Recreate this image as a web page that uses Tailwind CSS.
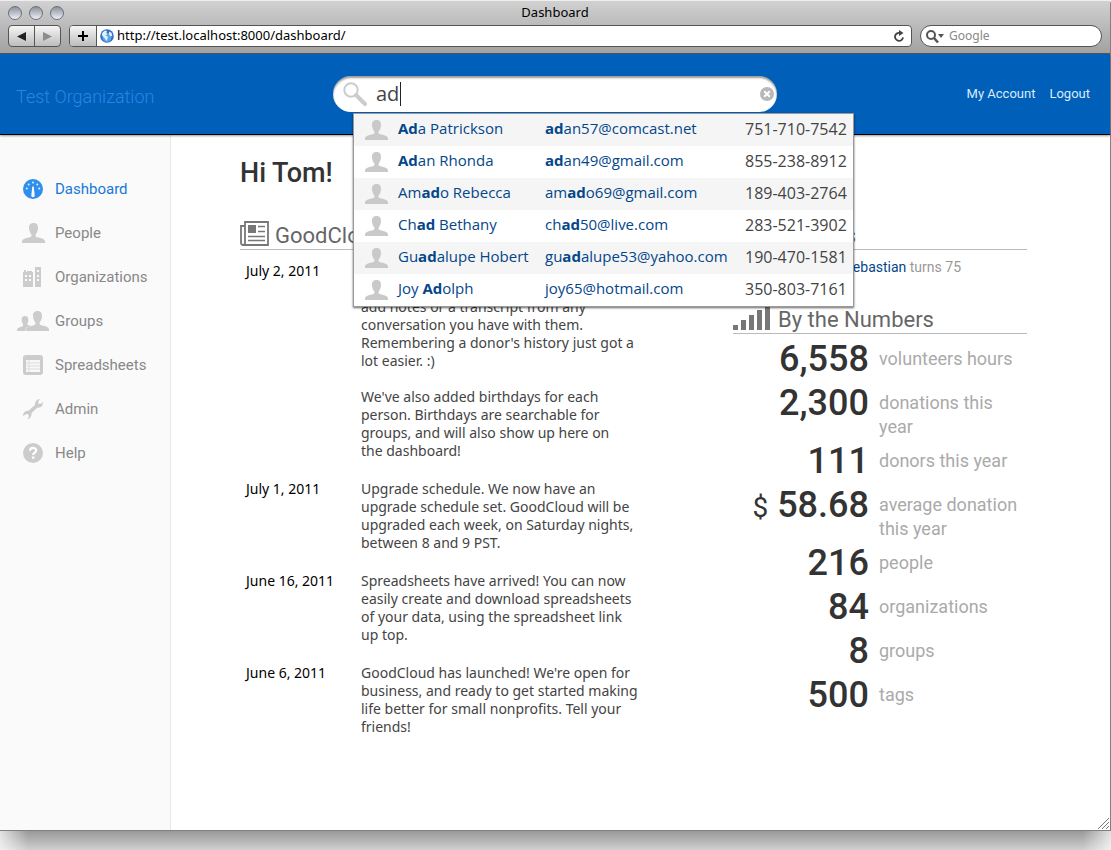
<!DOCTYPE html>
<html lang="en">
<head>
<meta charset="utf-8">
<title>Dashboard</title>
<script src="https://cdn.jsdelivr.net/npm/@tailwindcss/browser@4"></script>
</head>
<body class="flex min-h-screen flex-col bg-white font-['Open_Sans',sans-serif] text-[#444]">
<svg class="hidden" aria-hidden="true">
  <symbol id="person" viewBox="0 0 23 20"><path d="M11.500 0C8.300 0 6.800 2.200 7 5c.1 3 1 5 2.400 6.400v2.200C7 15 0 15.400 0 18.500V20h23v-1.500c0-3.100-7-3.500-9.400-4.900v-2.200C15 10 15.900 8 16 5c.2-2.800-1.300-5-4.500-5z"/></symbol>
</svg>
<div class="relative flex grow flex-col rounded-t border-r border-b border-[#808080]">
  <div class="flex flex-col border-b border-[#555] bg-linear-to-b from-[#d2d2d2] to-[#a2a2a2]">
    <div class="flex h-6 items-center border-t border-[#eee] px-2">
      <div class="flex flex-1 gap-[7px]">
        <button aria-label="Close" class="size-3.5 rounded-full border border-[#667080] bg-linear-to-b from-[#8d929b] to-[#eef0f5]"></button>
        <button aria-label="Minimize" class="size-3.5 rounded-full border border-[#667080] bg-linear-to-b from-[#8d929b] to-[#eef0f5]"></button>
        <button aria-label="Zoom" class="size-3.5 rounded-full border border-[#667080] bg-linear-to-b from-[#8d929b] to-[#eef0f5]"></button>
      </div>
      <span class="pb-[2px] font-['Noto_Sans',sans-serif] text-[13px] leading-4 text-black">Dashboard</span>
      <div class="flex-1"></div>
    </div>
    <div class="flex h-[29px] items-start gap-2 px-2 pt-px">
      <div class="flex h-[22px] w-[53px] shrink-0 rounded border border-[#555] bg-linear-to-b from-[#f6f6f6] to-[#bdbdbd]">
        <button aria-label="Back" class="flex flex-1 items-center justify-center border-r border-[#555]"><svg class="h-[9px] w-[9px] fill-[#222]" viewBox="0 0 9 9"><path d="M9 0v9L0 4.500z"/></svg></button>
        <button aria-label="Forward" class="flex flex-1 items-center justify-center"><svg class="h-[9px] w-[9px] fill-[#8c8c8c]" viewBox="0 0 9 9"><path d="M0 0v9l9-4.500z"/></svg></button>
      </div>
      <div class="flex h-[22px] grow overflow-hidden rounded border border-[#555] bg-white">
        <button aria-label="Add bookmark" class="flex w-[27px] shrink-0 items-center justify-center border-r border-[#555] bg-linear-to-b from-[#f6f6f6] to-[#bdbdbd]"><svg class="size-[10px] fill-black" viewBox="0 0 10 10"><path d="M4 0h2v4h4v2H6v4H4V6H0V4h4z"/></svg></button>
        <svg class="my-[3px] ml-[3px] size-[14px] shrink-0" viewBox="0 0 14 14"><circle cx="7" cy="7" r="6.800" fill="#2e6fc4"/><circle cx="7" cy="8.500" r="4.500" fill="#5da5ea"/><path d="M2.500 3.500 5 1.500l2 .6-.6 1.800 1 1-2 1.600 2.600 1.300L7.400 10l-1 2-1.400-2.400L3 7.500 1.800 6zM9 2.500l2.500 1.300.8 3-1.800.8-1.500-2z" fill="#e3f0fd"/></svg>
        <input aria-label="Address" class="ml-[3px] min-w-0 grow font-['Noto_Sans',sans-serif] text-[13px] text-black outline-none" value="http://test.localhost:8000/dashboard/">
        <button aria-label="Reload" class="mr-[6px] flex items-center"><svg class="size-3" viewBox="0 0 12 12"><path d="M7.800 3.200A4 4 0 1 0 10 7.400" fill="none" stroke="#444" stroke-width="1.800"/><path d="M6 0v6l4.500-3z" fill="#444"/></svg></button>
      </div>
      <label class="flex h-[22px] w-[182px] shrink-0 items-center rounded-full border border-[#555] bg-white pl-[5px]">
        <svg class="mr-[5px] h-[13px] w-[18px] shrink-0" viewBox="0 0 18 13"><circle cx="5" cy="5" r="4" fill="none" stroke="#555" stroke-width="2"/><path d="m8 8 4 4.500" stroke="#555" stroke-width="2.500"/><path d="M12 4h6l-3 4z" fill="#555"/></svg>
        <input aria-label="Google search" placeholder="Google" class="w-full min-w-0 font-['Noto_Sans',sans-serif] text-xs outline-none placeholder:text-[#888]">
      </label>
    </div>
  </div>

  <header class="relative z-10 flex h-[81px] items-center border-b border-black bg-[#005fb9] px-4 font-[Roboto,sans-serif] shadow-[0_1px_2px_#0006]">
    <a href="#" class="flex-1 pt-[6px] text-lg leading-6 font-light text-[#2488e6]">Test Organization</a>
    <div class="relative w-[444px]">
      <label class="flex h-9 items-center rounded-full bg-white px-[10px] shadow-[inset_0_2px_2px_#0006]">
        <svg class="mr-[9px] size-6 shrink-0" viewBox="0 0 24 24"><circle cx="8" cy="8" r="6.700" fill="none" stroke="#ccc" stroke-width="2"/><path d="m13 13 9 9" stroke="#ccc" stroke-width="4" stroke-linecap="round"/></svg>
        <span class="flex grow items-center">
          <input aria-label="Search contacts" value="ad" class="w-[24px] font-['Open_Sans',sans-serif] text-xl text-[#444] outline-none">
          <span class="h-6 w-px bg-[#222]"></span>
        </span>
        <button aria-label="Clear search" class="-mr-[7px]"><svg class="size-[14px]" viewBox="0 0 14 14"><circle cx="7" cy="7" r="7" fill="#b8b8b8"/><path d="m4.200 4.200 5.600 5.600m0-5.600-5.600 5.600" stroke="#fff" stroke-width="2"/></svg></button>
      </label>
      <div class="absolute top-[37px] left-5 w-[501px] border border-[#999] bg-white font-['Open_Sans',sans-serif] text-[15px] shadow-[0_1px_2px_#0009]">
        <table class="w-full table-fixed whitespace-nowrap">
          <colgroup><col class="w-[44px]"><col class="w-[147px]"><col class="w-[200px]"><col></colgroup>
          <tbody class="[&_a]:text-[#04468a] [&_svg]:ml-[11px] [&_svg]:h-5 [&_svg]:w-[23px] [&_svg]:fill-[#c9c9c9] [&_td+td]:pb-[3px] [&_td:last-child]:text-base [&_tr]:h-8 [&_tr:nth-child(odd)]:bg-[#f5f5f5]">
            <tr><td><svg><use href="#person"/></svg></td><td><a href="#"><b>Ad</b>a Patrickson</a></td><td><a href="#"><b>ad</b>an57@comcast.net</a></td><td>751-710-7542</td></tr>
            <tr><td><svg><use href="#person"/></svg></td><td><a href="#"><b>Ad</b>an Rhonda</a></td><td><a href="#"><b>ad</b>an49@gmail.com</a></td><td>855-238-8912</td></tr>
            <tr><td><svg><use href="#person"/></svg></td><td><a href="#">Am<b>ad</b>o Rebecca</a></td><td><a href="#">am<b>ad</b>o69@gmail.com</a></td><td>189-403-2764</td></tr>
            <tr><td><svg><use href="#person"/></svg></td><td><a href="#">Ch<b>ad</b> Bethany</a></td><td><a href="#">ch<b>ad</b>50@live.com</a></td><td>283-521-3902</td></tr>
            <tr><td><svg><use href="#person"/></svg></td><td><a href="#">Gu<b>ad</b>alupe Hobert</a></td><td><a href="#">gu<b>ad</b>alupe53@yahoo.com</a></td><td>190-470-1581</td></tr>
            <tr><td><svg><use href="#person"/></svg></td><td><a href="#">Joy <b>Ad</b>olph</a></td><td><a href="#">joy65@hotmail.com</a></td><td>350-803-7161</td></tr>
          </tbody>
        </table>
      </div>
    </div>
    <nav class="flex flex-1 justify-end gap-[14px] text-[13px] text-[#dcebfa]"><a href="#">My Account</a><a href="#" class="pr-1">Logout</a></nav>
  </header>

  <div class="flex grow">
    <nav class="w-[171px] shrink-0 border-r border-[#e8e8e8] bg-[#fafafa] pt-8 font-[Roboto,sans-serif] text-[15px] text-[#888] [&_a]:flex [&_a]:h-11 [&_a]:items-center [&_a]:gap-[10px] [&_span]:flex [&_span]:w-[45px] [&_span]:justify-end [&_svg]:shrink-0 [&_svg]:fill-[#ccc]">
      <a href="#" class="text-[#1778d8]"><span class="pr-[2px]"><svg class="size-5" viewBox="0 0 20 20"><circle cx="10" cy="10" r="10" fill="#2e90ec"/><path d="m9.300 7.500-1 9a1.700 1.700 0 0 0 3.400 0l-1-9z" fill="#fff"/><g fill="#e5f2fe"><circle cx="3.800" cy="9.600" r="1"/><circle cx="5.700" cy="5.500" r="1"/><circle cx="10" cy="3.500" r="1"/><circle cx="14.300" cy="5.500" r="1"/><circle cx="16.200" cy="9.600" r="1"/></g></svg></span>Dashboard</a>
      <a href="#"><span><svg class="h-5 w-[23px]"><use href="#person"/></svg></span>People</a>
      <a href="#"><span class="pr-1"><svg class="h-5 w-[18px]" viewBox="0 0 18 20"><path fill-rule="evenodd" d="M0 5h1V3h2v2h1V4h5v1h1v15H0zm2 3v2h2V8zm4 0v2h2V8zm-4 4v2h2v-2zm4 0v2h2v-2zM12 0h6v20h-6zm2 3v2h2V3zm0 5v2h2V8zm0 4v2h2v-2z"/></svg></span>Organizations</a>
      <a href="#"><span><svg class="-mr-1 h-5 w-8" viewBox="0 0 32 20"><svg x="9" width="23" height="20"><use href="#person"/></svg><path d="M8 5C5.500 5 4.500 6.500 4.700 9c.1 2 .6 3 1.300 4v2c-2 1-6 1.500-6 4v1h8.500c0-3 1-3.800 5-5.200-1.500-.6-3-.8-3.500-1.800 1-1 1.300-2 1.300-4C11.500 6.500 10.500 5 8 5z"/></svg></span>Groups</a>
      <a href="#"><span class="pr-[2px]"><svg class="size-5" viewBox="0 0 20 20"><rect width="20" height="20" rx="3"/><path d="M3 5h14v12H3z" fill="#f8f8f8"/><path d="M3 8h14M3 11h14M3 14h14M6 5v12" stroke="#ddd" fill="none"/></svg></span>Spreadsheets</a>
      <a href="#"><span class="pr-[2px]"><svg class="size-5" viewBox="0 0 20 20"><path d="M12 6c-.3-3 1.700-5.700 5-6l-2 3 .6 1.700 1.800.4L20 3c.3 3.500-2 6-5.500 5.600L8.500 14c.4 3-1.200 5.500-4 6l1.500-3-.6-1.600-2-.4L0 17c0-3.400 2.200-5.600 5.600-5.200z"/></svg></span>Admin</a>
      <a href="#"><span class="pr-[2px]"><svg class="size-5" viewBox="0 0 20 20"><circle cx="10" cy="10" r="10"/><path d="M7 7.800C7 5.700 8.200 4.800 10 4.800s3.200 1 3.200 2.600c0 2.200-3 2.200-3 4.600" stroke="#fff" stroke-width="2.200" fill="none"/><path d="M9 13.500h2.400v2.300H9z" fill="#fff"/></svg></span>Help</a>
    </nav>

    <main class="flex-1 pt-5 pr-[83px] pl-[69px]">
      <h1 class="font-[Roboto,sans-serif] text-[27px] leading-9 font-medium text-[#333]">Hi Tom!</h1>
      <div class="flex gap-20 pt-[27px]">
        <section class="flex-1">
          <h2 class="flex h-8 items-end gap-[6px] border-b border-[#bbb] pb-[3px] font-[Roboto,sans-serif] text-[22px] leading-5 whitespace-nowrap text-[#666]">
            <svg class="h-[25px] w-[29px]" viewBox="0 0 29 25"><path d="M5 1h23v23H3a2 2 0 0 1-2-2V5h4zm0 4v17a2 2 0 0 1-2 2" fill="none" stroke="#777" stroke-width="1.800"/><path d="M8 4h8v8H8z" fill="#777"/><path d="M18 5.500h7M18 10.500h7M8 15.500h17M8 19.500h17" stroke="#777" stroke-width="1.500"/></svg>GoodCloud</h2>
          <dl class="grid grid-cols-[115px_1fr] gap-y-5 pt-3 pl-[6px] font-['Noto_Sans',sans-serif] text-sm leading-[18px] whitespace-nowrap [&_dt]:text-black">
            <dt>July 2, 2011</dt><dd class="pt-9">add notes or a transcript from any<br>conversation you have with them.<br>Remembering a donor's history just got a<br>lot easier. :)<br><br>We've also added birthdays for each<br>person. Birthdays are searchable for<br>groups, and will also show up here on<br>the dashboard!</dd>
            <dt>July 1, 2011</dt><dd>Upgrade schedule. We now have an<br>upgrade schedule set. GoodCloud will be<br>upgraded each week, on Saturday nights,<br>between 8 and 9 PST.</dd>
            <dt>June 16, 2011</dt><dd>Spreadsheets have arrived! You can now<br>easily create and download spreadsheets<br>of your data, using the spreadsheet link<br>up top.</dd>
            <dt>June 6, 2011</dt><dd>GoodCloud has launched! We're open for<br>business, and ready to get started making<br>life better for small nonprofits. Tell your<br>friends!</dd>
          </dl>
        </section>
        <section class="w-[294px] shrink-0 font-[Roboto,sans-serif]">
          <h2 class="flex h-8 items-end border-b border-[#bbb] pb-[3px] text-[22px] leading-5 text-[#666]"><span class="w-[123px] text-right whitespace-nowrap">Birthdays</span></h2>
          <p class="flex h-[52px] pt-[7px] text-sm leading-5 text-[#999]"><span class="w-[228px] text-right"><a href="#" class="text-[#04468a]">Sebastian</a> turns 75</span></p>
          <h2 class="flex h-8 items-end gap-2 border-b border-[#bbb] pb-[3px] text-[22px] leading-5 text-[#666]">
            <svg class="h-6 w-[37px] fill-[#777]" viewBox="0 0 37 24"><path d="M0 19h5v5H0zM8 14h5v10H8zM16 9h5v15h-5zM24 4h5v20h-5zM32 0h5v24h-5z"/></svg>By the Numbers</h2>
          <dl class="grid grid-cols-[136px_1fr] gap-x-[10px] pt-[3px] text-lg leading-6 text-[#aaa] [&_dd]:pt-[10px] [&_dt]:text-right [&_dt]:text-4xl [&_dt]:leading-[44px] [&_dt]:font-medium [&_dt]:text-[#333]">
            <dt>6,558</dt><dd>volunteers hours</dd>
            <dt>2,300</dt><dd>donations this<br>year</dd>
            <dt>111</dt><dd>donors this year</dd>
            <dt><span class="text-[28px] font-normal">$</span> 58.68</dt><dd>average donation<br>this year</dd>
            <dt>216</dt><dd>people</dd>
            <dt>84</dt><dd>organizations</dd>
            <dt>8</dt><dd>groups</dd>
            <dt>500</dt><dd>tags</dd>
          </dl>
        </section>
      </div>
    </main>
  </div>
  <svg class="absolute right-0 bottom-0 size-3" viewBox="0 0 12 12"><path d="M0 11 11 0M4 11l7-7M8 11l3-3" stroke="#777"/></svg>
</div>
<div class="flex h-[19px] justify-between bg-linear-to-b from-[#999] to-[#d0d0d0]">
  <div class="w-7 bg-linear-to-r from-white/70 to-white/0"></div>
  <div class="w-7 bg-linear-to-l from-white/70 to-white/0"></div>
</div>
</body>
</html>
